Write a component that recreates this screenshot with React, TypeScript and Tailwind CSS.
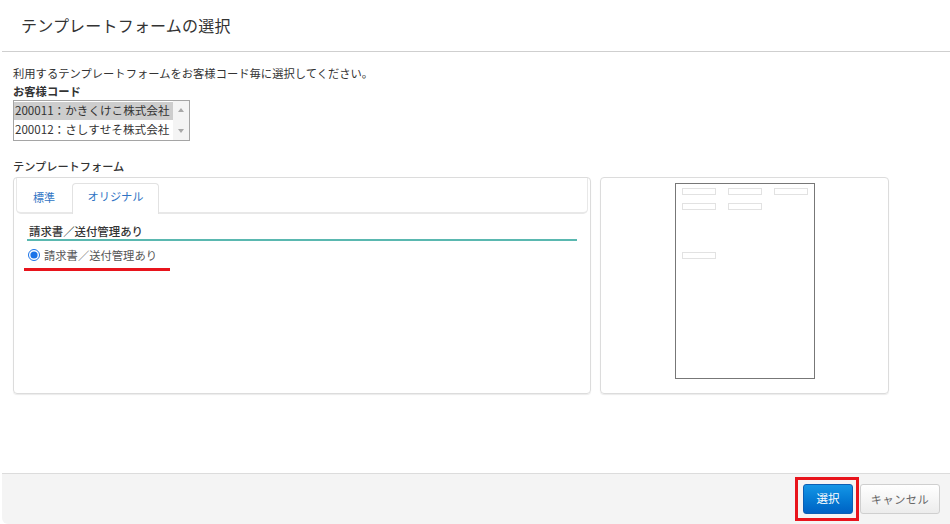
const jp = "font-['Noto_Sans_CJK_JP','Noto_Sans',sans-serif]";

function PaperPreview() {
  const box = "h-[7px] w-[34px] border border-[#e2e2e2]";
  return (
    <div className="mt-[5px] flex h-[196px] w-[140px] flex-col border border-[#777] bg-white px-[6px] pt-[4px]">
      <div className="flex gap-[12px]">
        <div className={box} />
        <div className={box} />
        <div className={box} />
      </div>
      <div className="mt-[8px] flex gap-[12px]">
        <div className={box} />
        <div className={box} />
      </div>
      <div className="mt-[42px] flex">
        <div className={box} />
      </div>
    </div>
  );
}

export default function App() {
  return (
    <div className={`${jp} flex h-[524px] w-[950px] flex-col bg-white pl-[2px] text-[#333]`}>
      <div className="flex h-[52px] items-center border-b border-[#cfcfcf] pl-[19px] pb-[2px]">
        <h1 className="text-[16px] font-normal tracking-[0.2px] text-[#333]">テンプレートフォームの選択</h1>
      </div>

      <div className="flex-1 pl-[11px] pt-[13px]">
        <p className="text-[11.3px] leading-[16px]">利用するテンプレートフォームをお客様コード毎に選択してください。</p>
        <p className="mt-[2px] text-[11.3px] font-bold leading-[16px]">お客様コード</p>
        <div className="mt-[1px] flex h-[41px] w-[177px] border border-[#a5a5a5] bg-white">
          <div className="min-w-0 flex-1 overflow-hidden pt-[1px]">
            <div className="flex h-[18px] items-center whitespace-nowrap bg-[#cdcdcd] pl-[1px] text-[11.6px] leading-none">200011：かきくけこ株式会社</div>
            <div className="flex h-[19px] items-center whitespace-nowrap pl-[1px] text-[11.6px] leading-none">200012：さしすせそ株式会社</div>
          </div>
          <div className="flex w-[16px] flex-col items-center justify-between bg-[#f4f4f4] py-[7px]">
            <div className="h-0 w-0 border-x-[3px] border-b-[4px] border-x-transparent border-b-[#a8a8a8]" />
            <div className="h-0 w-0 border-x-[3px] border-t-[4px] border-x-transparent border-t-[#a8a8a8]" />
          </div>
        </div>

        <p className="mt-[17px] text-[11.2px] font-medium leading-[16px]">テンプレートフォーム</p>

        <div className="mt-[3px] flex gap-[9px]">
          <div className="h-[217px] w-[578px] rounded-[4px] border border-[#dcdcdc] px-[2px] shadow-[0_1px_1px_rgba(0,0,0,0.08)]">
            <div className="flex h-[36px] items-end rounded-b-[5px] border-b-2 border-x border-[#e8e8e8] pl-[55px]">
              <div className="-mb-[2px] flex h-[31px] w-[87px] items-center justify-center rounded-t-[4px] border-x border-t border-[#e2e2e2] bg-white pb-[5px] text-[11.2px] text-[#2f74c4]">
                オリジナル
              </div>
            </div>
            <div className="-mt-[25px] ml-[17px] text-[11px] text-[#2f74c4]">標準</div>
            <div className="mx-[11px] mt-[18px]">
              <div className="border-b-2 border-[#5ab8b0] pb-[1px] pl-[2px] text-[11.4px] font-medium leading-[14px]">請求書／送付管理あり</div>
              <label className="mt-[6px] flex items-center gap-[4px] pl-[1px] text-[11.3px] text-[#555]">
                <input type="radio" defaultChecked className="m-0 h-[12px] w-[12px] accent-[#1a73e8]" />
                請求書／送付管理あり
              </label>
            </div>
            <div className="ml-[8px] mt-[5px] h-[3px] w-[146px] bg-[#e8141c]" />
          </div>

          <div className="flex h-[217px] w-[289px] justify-center rounded-[4px] border border-[#dcdcdc] shadow-[0_1px_1px_rgba(0,0,0,0.08)]">
            <PaperPreview />
          </div>
        </div>
      </div>

      <div className="flex h-[51px] items-center justify-end rounded-bl-[6px] border-t border-[#dcdcdc] bg-[#f4f4f4] pr-[10px]">
        <div className="border-[3px] border-[#e8141c] py-[4px] pl-[5px] pr-[3px]">
          <button
            type="button"
            className="flex h-[30px] w-[50px] items-center justify-center rounded-[3px] border border-[#0b5fb4] bg-gradient-to-b from-[#1496e6] to-[#0062c4] text-[11.5px] text-white"
          >
            選択
          </button>
        </div>
        <button
          type="button"
          className="ml-[1px] flex h-[30px] w-[80px] items-center justify-center rounded-[3px] border border-[#cfcfcf] bg-gradient-to-b from-white to-[#ececec] text-[11.2px] tracking-[0.5px] text-[#666]"
        >
          キャンセル
        </button>
      </div>
    </div>
  );
}
